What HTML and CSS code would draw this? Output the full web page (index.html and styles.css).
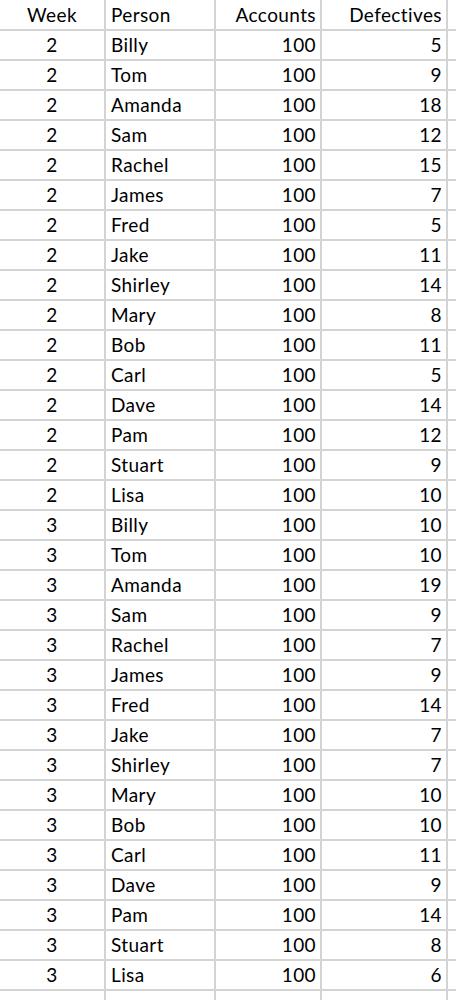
FILE: index.html
```html
<!DOCTYPE html>
<html>
<head>
<meta charset="utf-8">
<link rel="stylesheet" href="styles.css">
</head>
<body>
<div class="sheet">
  <div class="c h ctr">Week</div><div class="c h">Person</div><div class="c h rt">Accounts</div><div class="c h rt">Defectives</div><div class="c h"></div>
  <div class="c ctr">2</div><div class="c">Billy</div><div class="c rt">100</div><div class="c rt">5</div><div class="c"></div>
  <div class="c ctr">2</div><div class="c">Tom</div><div class="c rt">100</div><div class="c rt">9</div><div class="c"></div>
  <div class="c ctr">2</div><div class="c">Amanda</div><div class="c rt">100</div><div class="c rt">18</div><div class="c"></div>
  <div class="c ctr">2</div><div class="c">Sam</div><div class="c rt">100</div><div class="c rt">12</div><div class="c"></div>
  <div class="c ctr">2</div><div class="c">Rachel</div><div class="c rt">100</div><div class="c rt">15</div><div class="c"></div>
  <div class="c ctr">2</div><div class="c">James</div><div class="c rt">100</div><div class="c rt">7</div><div class="c"></div>
  <div class="c ctr">2</div><div class="c">Fred</div><div class="c rt">100</div><div class="c rt">5</div><div class="c"></div>
  <div class="c ctr">2</div><div class="c">Jake</div><div class="c rt">100</div><div class="c rt">11</div><div class="c"></div>
  <div class="c ctr">2</div><div class="c">Shirley</div><div class="c rt">100</div><div class="c rt">14</div><div class="c"></div>
  <div class="c ctr">2</div><div class="c">Mary</div><div class="c rt">100</div><div class="c rt">8</div><div class="c"></div>
  <div class="c ctr">2</div><div class="c">Bob</div><div class="c rt">100</div><div class="c rt">11</div><div class="c"></div>
  <div class="c ctr">2</div><div class="c">Carl</div><div class="c rt">100</div><div class="c rt">5</div><div class="c"></div>
  <div class="c ctr">2</div><div class="c">Dave</div><div class="c rt">100</div><div class="c rt">14</div><div class="c"></div>
  <div class="c ctr">2</div><div class="c">Pam</div><div class="c rt">100</div><div class="c rt">12</div><div class="c"></div>
  <div class="c ctr">2</div><div class="c">Stuart</div><div class="c rt">100</div><div class="c rt">9</div><div class="c"></div>
  <div class="c ctr">2</div><div class="c">Lisa</div><div class="c rt">100</div><div class="c rt">10</div><div class="c"></div>
  <div class="c ctr">3</div><div class="c">Billy</div><div class="c rt">100</div><div class="c rt">10</div><div class="c"></div>
  <div class="c ctr">3</div><div class="c">Tom</div><div class="c rt">100</div><div class="c rt">10</div><div class="c"></div>
  <div class="c ctr">3</div><div class="c">Amanda</div><div class="c rt">100</div><div class="c rt">19</div><div class="c"></div>
  <div class="c ctr">3</div><div class="c">Sam</div><div class="c rt">100</div><div class="c rt">9</div><div class="c"></div>
  <div class="c ctr">3</div><div class="c">Rachel</div><div class="c rt">100</div><div class="c rt">7</div><div class="c"></div>
  <div class="c ctr">3</div><div class="c">James</div><div class="c rt">100</div><div class="c rt">9</div><div class="c"></div>
  <div class="c ctr">3</div><div class="c">Fred</div><div class="c rt">100</div><div class="c rt">14</div><div class="c"></div>
  <div class="c ctr">3</div><div class="c">Jake</div><div class="c rt">100</div><div class="c rt">7</div><div class="c"></div>
  <div class="c ctr">3</div><div class="c">Shirley</div><div class="c rt">100</div><div class="c rt">7</div><div class="c"></div>
  <div class="c ctr">3</div><div class="c">Mary</div><div class="c rt">100</div><div class="c rt">10</div><div class="c"></div>
  <div class="c ctr">3</div><div class="c">Bob</div><div class="c rt">100</div><div class="c rt">10</div><div class="c"></div>
  <div class="c ctr">3</div><div class="c">Carl</div><div class="c rt">100</div><div class="c rt">11</div><div class="c"></div>
  <div class="c ctr">3</div><div class="c">Dave</div><div class="c rt">100</div><div class="c rt">9</div><div class="c"></div>
  <div class="c ctr">3</div><div class="c">Pam</div><div class="c rt">100</div><div class="c rt">14</div><div class="c"></div>
  <div class="c ctr">3</div><div class="c">Stuart</div><div class="c rt">100</div><div class="c rt">8</div><div class="c"></div>
  <div class="c ctr">3</div><div class="c">Lisa</div><div class="c rt">100</div><div class="c rt">6</div><div class="c"></div>
  <div class="c"></div><div class="c"></div><div class="c"></div><div class="c"></div><div class="c"></div>
</div>
</body>
</html>
```
FILE: styles.css
```css
html, body {
  margin: 0;
  padding: 0;
  height: 1000px;
  overflow: hidden;
  background: #ffffff;
}
.sheet {
  display: grid;
  grid-template-columns: 104px 108px 104px 124px 1fr;
  grid-template-rows: 29px repeat(32, 28px) 20px;
  gap: 2px;
  background: #d4d4d4;
  font-family: Lato, "Liberation Sans", sans-serif;
  font-size: 19px;
  letter-spacing: 0.4px;
  color: #000000;
}
.c {
  background: #ffffff;
  display: flex;
  align-items: flex-end;
  padding: 0 5px 4px 5px;
  line-height: 20px;
  white-space: nowrap;
  overflow: hidden;
}
.h {
  padding-bottom: 4px;
}
.ctr {
  justify-content: center;
}
.rt {
  justify-content: flex-end;
  padding-right: 4px;
}
```
